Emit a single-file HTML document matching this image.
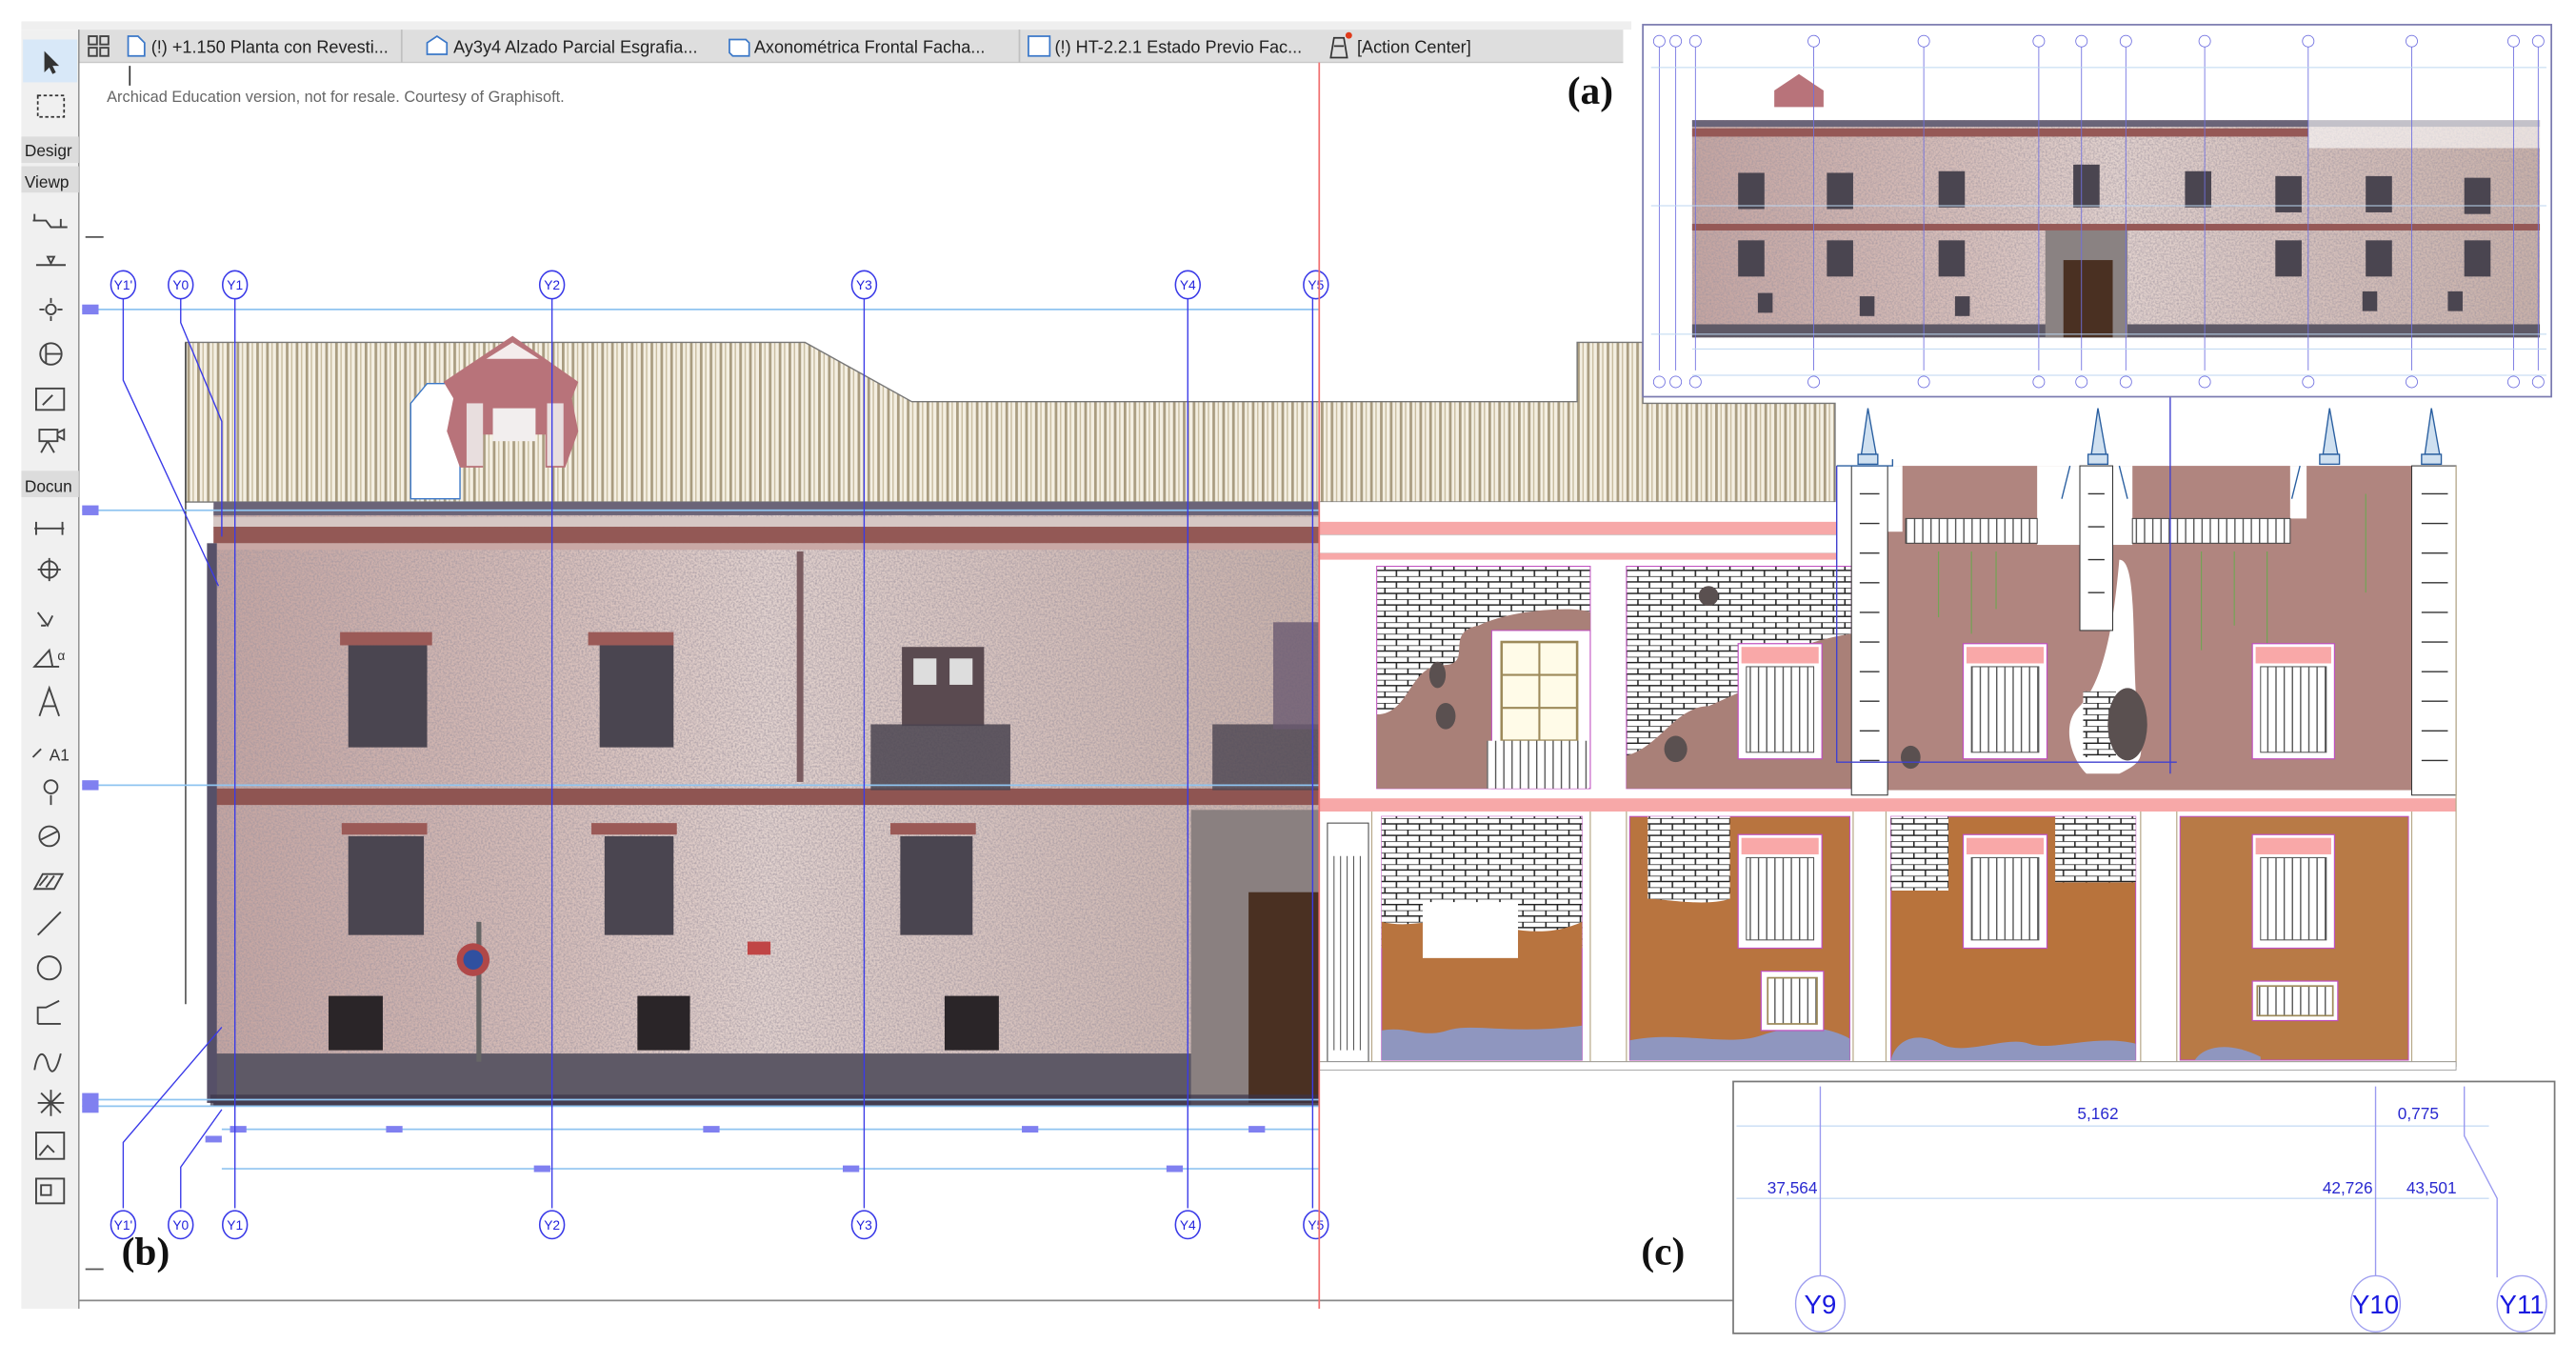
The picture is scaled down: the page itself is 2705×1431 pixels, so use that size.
<!DOCTYPE html>
<html><head><meta charset="utf-8">
<style>
html,body{margin:0;padding:0;background:#fff;overflow:hidden}
svg{display:block}
text{font-family:"Liberation Sans",sans-serif}
.lab{font-family:"Liberation Serif",serif;font-weight:bold;font-size:24px;fill:#111}
.g{fill:#fff;stroke:#3a3ae8;stroke-width:0.9}
.gt{font-size:8px;fill:#2222dd;text-anchor:middle}
.gl{stroke:#3a3ae8;stroke-width:0.8;fill:none}
.hl{stroke:#8fc4f0;stroke-width:1}
.tab{font-size:10.5px;fill:#222}
.tb{font-size:10px;fill:#222}
.ic{stroke:#444;stroke-width:1.1;fill:none}
</style></head><body>
<svg width="2705" height="1431" viewBox="0 0 1568 828" preserveAspectRatio="none" xmlns="http://www.w3.org/2000/svg">
<defs>
<pattern id="stripe" width="6" height="120" patternUnits="userSpaceOnUse">
<rect width="6" height="120" fill="#f4efe2"/><rect x="0" width="1.6" height="120" fill="#a99c80"/><rect x="3.2" width="0.8" height="120" fill="#c8bc9f"/>
</pattern>
<pattern id="brick" width="14" height="7" patternUnits="userSpaceOnUse">
<rect width="14" height="7" fill="#fff"/><path d="M0 0H14M0 3.5H14M3 0V3.5M10 3.5V7" stroke="#222" stroke-width="0.9"/>
</pattern>
<pattern id="grille" width="5" height="60" patternUnits="userSpaceOnUse">
<rect width="5" height="60" fill="#fff"/><rect width="0.8" height="60" fill="#555"/>
</pattern>
<filter id="noise" x="0" y="0" width="100%" height="100%">
<feTurbulence type="fractalNoise" baseFrequency="0.9" numOctaves="2" seed="3"/>
<feColorMatrix type="matrix" values="0 0 0 0 0.35  0 0 0 0 0.3  0 0 0 0 0.35  0 0 0 1.6 -0.55"/>
<feComposite in2="SourceGraphic" operator="in"/>
</filter>
<linearGradient id="wall" x1="0" y1="0" x2="1" y2="0">
<stop offset="0" stop-color="#c4a4a0"/><stop offset="0.3" stop-color="#d6bdb8"/><stop offset="0.5" stop-color="#e2d2ce"/><stop offset="0.75" stop-color="#d4bfba"/><stop offset="1" stop-color="#c8b0a8"/>
</linearGradient>
</defs>

<!-- UI chrome -->
<rect x="13" y="13" width="980" height="5" fill="#efefef"/>
<rect x="48" y="18" width="940" height="20" fill="#dedede"/>
<rect x="48" y="37.5" width="940" height="0.8" fill="#c8c8c8"/>
<rect x="13" y="18" width="35" height="777" fill="#f0f0f0"/>
<line x1="48" y1="18" x2="48" y2="795" stroke="#888" stroke-width="0.8"/>
<rect x="14" y="24" width="33" height="26" fill="#d8e8f8"/>
<path d="M27 31l0 13 3-3 2 4 2-1-2-4 4 0z" fill="#333"/>
<rect x="23" y="58" width="16" height="13" fill="none" stroke="#333" stroke-width="1" stroke-dasharray="2 1.5"/>
<rect x="13" y="83" width="35" height="16" fill="#dcdcdc"/><text x="15" y="95" class="tb">Desigr</text>
<rect x="13" y="101" width="35" height="16" fill="#dcdcdc"/><text x="15" y="114" class="tb">Viewp</text>
<rect x="13" y="286" width="35" height="16" fill="#dcdcdc"/><text x="15" y="299" class="tb">Docun</text>
<g class="ic">
<path d="M20 134h8l3 4h10M21 130v4M37 138v-5"/>
<path d="M22 161h18M31 160l-2-4h4z"/>
<circle cx="31" cy="188" r="3"/><path d="M31 181v3M31 192v3M24 188h3M35 188h3"/>
<circle cx="31" cy="215" r="6.5"/><path d="M28 209v12M28 215h9"/>
<rect x="22" y="236" width="17" height="13"/><path d="M26 246l6-6"/>
<path d="M24 261h11v7H24zM35 263l4-2v6l-4-2M29 268l-4 7M29 268l4 7"/>
<path d="M21 321h18M22 317v8M38 317v8"/>
<circle cx="30" cy="346" r="5"/><path d="M30 339v14M23 346h14"/>
<path d="M23 372l6 8 3-6M28 380l-3 0"/>
<path d="M21 405l9-10 2 10zM21 405h15"/>
<path d="M24 435l6-17 6 17M26 429h8"/>
<path d="M20 460l5-5"/>
<circle cx="31" cy="478" r="4"/><path d="M31 483v6"/>
<circle cx="30" cy="508" r="6"/><path d="M25 510l10-5"/>
<path d="M21 540l5-9h12l-5 9z"/><path d="M24 538l5-6M28 539l5-7"/>
<path d="M23 568l14-14"/>
<circle cx="30" cy="588" r="7"/>
<path d="M23 622v-10h5l8-4M23 622h14"/>
<path d="M21 650c2-12 6-12 8-4s5 6 8-6"/>
<path d="M31 662v16M23 670h16M25 664l12 12M25 676l12-12"/>
<rect x="22" y="688" width="17" height="16"/><path d="M24 702l5-6 4 4"/>
<rect x="22" y="716" width="17" height="15"/><path d="M25 720h6v6h-6z"/>
</g>
<text x="30" y="462" font-size="10" fill="#333">A1</text>
<text x="35" y="401" font-size="8" fill="#333">α</text>

<!-- tabs -->
<g class="ic" stroke="#444"><rect x="54" y="22" width="5" height="5"/><rect x="61" y="22" width="5" height="5"/><rect x="54" y="29" width="5" height="5"/><rect x="61" y="29" width="5" height="5"/></g>
<path d="M78 22h6l4 4v8H78z" fill="#fff" stroke="#3a77c8"/>
<text x="92" y="32" class="tab">(!) +1.150 Planta con Revesti...</text>
<rect x="244" y="18" width="1" height="20" fill="#c0c0c0"/>
<path d="M260 33v-7l6-4 6 4v7z" fill="#fff" stroke="#3a77c8"/>
<text x="276" y="32" class="tab">Ay3y4 Alzado Parcial Esgrafia...</text>
<path d="M444 24h10l2 2v8h-10l-2-2z" fill="#fff" stroke="#3a77c8"/>
<text x="459" y="32" class="tab">Axonométrica Frontal Facha...</text>
<rect x="620" y="18" width="1" height="20" fill="#c0c0c0"/>
<rect x="626" y="22" width="13" height="12" fill="#fff" stroke="#3a77c8"/>
<text x="642" y="32" class="tab">(!) HT-2.2.1 Estado Previo Fac...</text>
<path d="M810 35l2-12h6l2 12zM812 28h6" fill="none" stroke="#333"/>
<circle cx="821" cy="21.5" r="2" fill="#e03a1a"/>
<text x="826" y="32" class="tab">[Action Center]</text>
<text x="65" y="62" font-size="9.5" fill="#666">Archicad Education version, not for resale. Courtesy of Graphisoft.</text>
<line x1="79" y1="40" x2="79" y2="52" stroke="#333"/>
<line x1="52" y1="144" x2="63" y2="144" stroke="#555"/>
<line x1="52" y1="771" x2="63" y2="771" stroke="#555"/>

<!-- drawing frame -->
<line x1="48" y1="790" x2="1055" y2="790" stroke="#888" stroke-width="1"/>

<!-- roof (b) -->
<path d="M113 208H490L555 244H960V208H1000V245H1117V305H113Z" fill="url(#stripe)" stroke="#777" stroke-width="0.8"/>
<line x1="113" y1="208" x2="113" y2="610" stroke="#333" stroke-width="0.8"/>
<!-- dormer -->
<path d="M250 245l10-12h20v70h-30z" fill="#fff" stroke="#3a77c8" stroke-width="0.8"/>
<path d="M270 232l42-28 40 28-4 10 4 20-8 22h-12v-20h-38v20h-14l-8-22 4-20z" fill="#b8737a"/>
<path d="M296 218l16-10 16 10z" fill="#f4ecec"/>
<rect x="300" y="248" width="26" height="20" fill="#f2eeee"/>
<rect x="284" y="245" width="10" height="38" fill="#e8dede"/>
<rect x="333" y="245" width="10" height="38" fill="#e8dede"/>

<!-- point cloud facade (b) -->
<rect x="130" y="308" width="673" height="364" fill="url(#wall)"/>
<rect x="130" y="308" width="673" height="364" fill="#fff" filter="url(#noise)" opacity="0.95"/>
<rect x="130" y="305" width="673" height="8" fill="#6b6478"/>
<rect x="130" y="314" width="673" height="6" fill="#d6c7c4"/>
<rect x="130" y="320" width="673" height="10" fill="#935855"/>
<rect x="130" y="330" width="673" height="4" fill="#c9a8a5"/>
<rect x="130" y="479" width="673" height="10" fill="#8f5552"/>
<rect x="130" y="640" width="673" height="32" fill="#5e5966"/>
<rect x="126" y="330" width="6" height="340" fill="#565068"/>
<rect x="485" y="335" width="4" height="140" fill="#7a5c60"/>
<rect x="290" y="560" width="3" height="85" fill="#666"/>
<!-- windows -->
<g fill="#4a4550">
<rect x="212" y="392" width="48" height="62"/><rect x="365" y="392" width="45" height="62"/>
<rect x="212" y="508" width="46" height="60"/><rect x="368" y="508" width="42" height="60"/><rect x="548" y="508" width="44" height="60"/>
<rect x="200" y="605" width="33" height="33" fill="#2a2528"/><rect x="388" y="605" width="32" height="33" fill="#2a2528"/><rect x="575" y="605" width="33" height="33" fill="#2a2528"/>
</g>
<g fill="#9b5a57"><rect x="207" y="384" width="56" height="8"/><rect x="358" y="384" width="52" height="8"/><rect x="208" y="500" width="52" height="7"/><rect x="360" y="500" width="52" height="7"/><rect x="542" y="500" width="52" height="7"/></g>
<rect x="549" y="393" width="50" height="48" fill="#5a4a50"/><rect x="556" y="400" width="14" height="16" fill="#ddd"/><rect x="578" y="400" width="14" height="16" fill="#ddd"/>
<rect x="530" y="440" width="85" height="40" fill="#4a4450" opacity="0.85"/>
<rect x="738" y="440" width="65" height="40" fill="#4a4450" opacity="0.8"/>
<rect x="775" y="378" width="28" height="65" fill="#6a5a70" opacity="0.8"/>
<rect x="725" y="492" width="78" height="180" fill="#8a8080"/>
<rect x="760" y="542" width="43" height="128" fill="#4a3022"/>
<circle cx="288" cy="583" r="10" fill="#b04848"/><circle cx="288" cy="583" r="6" fill="#3050a0"/>
<rect x="455" y="572" width="14" height="8" fill="#c04545"/>
<rect x="128" y="665" width="675" height="7" fill="#3a3348" opacity="0.7"/>

<!-- grid lines (b) -->
<g class="hl"><line x1="50" y1="188" x2="803" y2="188"/><line x1="50" y1="310" x2="803" y2="310"/><line x1="50" y1="477" x2="803" y2="477"/><line x1="50" y1="668" x2="803" y2="668"/><line x1="50" y1="672" x2="803" y2="672"/><line x1="135" y1="686" x2="803" y2="686"/><line x1="135" y1="710" x2="803" y2="710"/></g>
<g fill="#8080f0"><rect x="50" y="185" width="10" height="6"/><rect x="50" y="307" width="10" height="6"/><rect x="50" y="474" width="10" height="6"/><rect x="50" y="664" width="10" height="12"/>
<rect x="140" y="684" width="10" height="4"/><rect x="235" y="684" width="10" height="4"/><rect x="428" y="684" width="10" height="4"/><rect x="622" y="684" width="10" height="4"/><rect x="760" y="684" width="10" height="4"/>
<rect x="325" y="708" width="10" height="4"/><rect x="513" y="708" width="10" height="4"/><rect x="710" y="708" width="10" height="4"/><rect x="125" y="690" width="10" height="4"/></g>
<g class="gl">
<line x1="143" y1="181" x2="143" y2="734"/><line x1="336" y1="181" x2="336" y2="734"/><line x1="526" y1="181" x2="526" y2="734"/><line x1="723" y1="181" x2="723" y2="734"/><line x1="799" y1="181" x2="799" y2="734"/>
<path d="M75 181v50l58 125"/><path d="M110 181v15l25 60v70"/><path d="M75 734v-40l60-70"/><path d="M110 734v-25l25-35"/>
</g>
<g>
<ellipse class="g" cx="75" cy="173" rx="7.5" ry="8.5"/><text class="gt" x="75" y="176">Y1'</text>
<ellipse class="g" cx="110" cy="173" rx="7.5" ry="8.5"/><text class="gt" x="110" y="176">Y0</text>
<ellipse class="g" cx="143" cy="173" rx="7.5" ry="8.5"/><text class="gt" x="143" y="176">Y1</text>
<ellipse class="g" cx="336" cy="173" rx="7.5" ry="8.5"/><text class="gt" x="336" y="176">Y2</text>
<ellipse class="g" cx="526" cy="173" rx="7.5" ry="8.5"/><text class="gt" x="526" y="176">Y3</text>
<ellipse class="g" cx="723" cy="173" rx="7.5" ry="8.5"/><text class="gt" x="723" y="176">Y4</text>
<ellipse class="g" cx="801" cy="173" rx="7.5" ry="8.5"/><text class="gt" x="801" y="176">Y5</text>
<ellipse class="g" cx="75" cy="744" rx="7.5" ry="8.5"/><text class="gt" x="75" y="747">Y1'</text>
<ellipse class="g" cx="110" cy="744" rx="7.5" ry="8.5"/><text class="gt" x="110" y="747">Y0</text>
<ellipse class="g" cx="143" cy="744" rx="7.5" ry="8.5"/><text class="gt" x="143" y="747">Y1</text>
<ellipse class="g" cx="336" cy="744" rx="7.5" ry="8.5"/><text class="gt" x="336" y="747">Y2</text>
<ellipse class="g" cx="526" cy="744" rx="7.5" ry="8.5"/><text class="gt" x="526" y="747">Y3</text>
<ellipse class="g" cx="723" cy="744" rx="7.5" ry="8.5"/><text class="gt" x="723" y="747">Y4</text>
<ellipse class="g" cx="801" cy="744" rx="7.5" ry="8.5"/><text class="gt" x="801" y="747">Y5</text>
</g>

<!-- elevation (c) -->
<rect x="803" y="305" width="315" height="12" fill="#fff"/>
<rect x="803" y="317" width="315" height="8" fill="#f7a8a8"/>
<rect x="803" y="325" width="315" height="11" fill="#fff" stroke="#ccc" stroke-width="0.5"/>
<rect x="803" y="336" width="315" height="4" fill="#f7a8a8"/>
<rect x="1146" y="283" width="327" height="197" fill="#b0857f"/>
<rect x="1146" y="283" width="12" height="40" fill="#fff"/>
<rect x="1240" y="283" width="58" height="48" fill="#fff"/>
<rect x="1394" y="283" width="10" height="32" fill="#fff"/>
<rect x="1160" y="315" width="80" height="15" fill="url(#grille)" stroke="#444" stroke-width="0.6"/>
<rect x="1298" y="315" width="96" height="15" fill="url(#grille)" stroke="#444" stroke-width="0.6"/>
<g stroke="#6aa84f" stroke-width="0.6"><path d="M1180 335v40M1200 335v50M1215 335v35M1340 335v60M1360 335v45M1380 335v70M1440 300v60"/></g>
<rect x="838" y="344" width="130" height="135" fill="url(#brick)" stroke="#c050c0" stroke-width="0.6"/>
<path d="M900 380c20-10 60-12 68-8v107H838v-45c20 0 20-30 40-30s0-20 22-24z" fill="#a98078"/>
<rect x="990" y="344" width="137" height="135" fill="url(#brick)" stroke="#c050c0" stroke-width="0.6"/>
<path d="M1060 420c15-20 35-30 67-35v94H990v-20c20-5 30-30 50-30z" fill="#a98078"/>
<rect x="908" y="383" width="60" height="96" fill="#fff" stroke="#c050c0" stroke-width="0.6"/>
<rect x="914" y="390" width="46" height="60" fill="#fffbe8" stroke="#9d8a5a" stroke-width="1.5"/>
<path d="M937 390v60M914 410h46M914 430h46" stroke="#9d8a5a" stroke-width="1.2"/>
<rect x="905" y="450" width="62" height="29" fill="url(#grille)"/>
<path d="M1290 340c10 0 8 40 10 80s10 40-10 50h-20c-10-10-15-30-5-40s20-30 25-90z" fill="#fff"/>
<path d="M1268 420h20v40h-20z" fill="url(#brick)"/>
<g fill="#5a5050"><ellipse cx="880" cy="435" rx="6" ry="8"/><ellipse cx="1020" cy="455" rx="7" ry="8"/><ellipse cx="1040" cy="362" rx="6" ry="6"/><ellipse cx="1295" cy="440" rx="12" ry="22"/><ellipse cx="1163" cy="460" rx="6" ry="7"/><ellipse cx="875" cy="410" rx="5" ry="8"/></g>
<!-- pilasters & spires -->
<g fill="#fff" stroke="#333" stroke-width="0.6">
<rect x="1127" y="283" width="22" height="200"/><rect x="1266" y="283" width="20" height="100"/><rect x="1468" y="283" width="27" height="200"/>
</g>
<g stroke="#333" stroke-width="0.8">
<path d="M1132 300h12M1132 318h12M1132 336h12M1132 354h12M1132 372h12M1132 390h12M1132 408h12M1132 426h12M1132 444h12M1132 462h12"/>
<path d="M1474 300h16M1474 318h16M1474 336h16M1474 354h16M1474 372h16M1474 390h16M1474 408h16M1474 426h16M1474 444h16M1474 462h16"/>
<path d="M1271 300h10M1271 320h10M1271 340h10M1271 360h10"/>
</g>
<g fill="#cfe0f0" stroke="#2a5fa0" stroke-width="0.8">
<path d="M1137 248l-4 28h9z"/><path d="M1277 248l-4 28h9z"/><path d="M1418 248l-4 28h9z"/><path d="M1480 248l-4 28h9z"/>
<rect x="1131" y="276" width="12" height="6"/><rect x="1271" y="276" width="12" height="6"/><rect x="1412" y="276" width="12" height="6"/><rect x="1474" y="276" width="12" height="6"/>
</g>
<path d="M1118 283h34v-4M1260 283l-5 20M1290 283l5 20M1400 283l-5 20" stroke="#2a5fa0" fill="none" stroke-width="0.8"/>
<path d="M1118 283v180h207" stroke="#4040d0" fill="none" stroke-width="0.8"/>
<line x1="1321" y1="240" x2="1321" y2="470" stroke="#4040d0" stroke-width="0.8"/>
<!-- upper windows -->
<g>
<rect x="1058" y="391" width="51" height="70" fill="#fff" stroke="#c050c0" stroke-width="0.7"/>
<rect x="1195" y="391" width="51" height="70" fill="#fff" stroke="#c050c0" stroke-width="0.7"/>
<rect x="1371" y="391" width="50" height="70" fill="#fff" stroke="#c050c0" stroke-width="0.7"/>
<rect x="1060" y="393" width="47" height="10" fill="#f9a8a8"/><rect x="1197" y="393" width="47" height="10" fill="#f9a8a8"/><rect x="1373" y="393" width="46" height="10" fill="#f9a8a8"/>
<rect x="1063" y="405" width="41" height="52" fill="url(#grille)" stroke="#555" stroke-width="0.6"/>
<rect x="1200" y="405" width="41" height="52" fill="url(#grille)" stroke="#555" stroke-width="0.6"/>
<rect x="1376" y="405" width="40" height="52" fill="url(#grille)" stroke="#555" stroke-width="0.6"/>
</g>
<!-- lower storey -->
<rect x="803" y="485" width="692" height="8" fill="#f7a8a8"/>
<rect x="803" y="493" width="692" height="157" fill="#fff"/>
<g stroke="#b7a888" stroke-width="0.7" fill="none">
<path d="M835 493v155M968 493v155M990 493v155M1128 493v155M1148 493v155M1303 493v155M1325 493v155M1468 493v155M1495 283v365M803 645h692"/>
</g>
<rect x="808" y="500" width="25" height="145" fill="#fff" stroke="#444" stroke-width="0.6"/>
<path d="M812 520v118M816 520v118M820 520v118M824 520v118M828 520v118" stroke="#555" stroke-width="0.6"/>
<rect x="841" y="496" width="122" height="148" fill="#b8743f" stroke="#c050c0" stroke-width="0.6"/>
<rect x="841" y="496" width="122" height="80" fill="url(#brick)"/>
<path d="M841 560c20 5 40-5 60 0s40 10 62 0v16H841z" fill="#b8743f"/>
<rect x="866" y="548" width="58" height="34" fill="#fff"/>
<rect x="992" y="496" width="134" height="148" fill="#b8743f" stroke="#c050c0" stroke-width="0.6"/>
<path d="M1003 496h50v50c-15 5-40 0-50 0z" fill="url(#brick)"/>
<rect x="1151" y="496" width="149" height="148" fill="#b8733c" stroke="#c050c0" stroke-width="0.6"/>
<path d="M1151 496h35v45h-35zM1251 496h49v40h-49z" fill="url(#brick)"/>
<rect x="1327" y="496" width="139" height="148" fill="#b87a46" stroke="#c050c0" stroke-width="0.6"/>
<g fill="#8f96bf">
<path d="M841 644v-18c15-3 25 5 40 0s40 3 82-3v21z"/><path d="M992 644v-12c30-6 60 4 80-3s40-6 54 2v13z"/>
<path d="M1151 644c3-12 15-18 30-10s40-5 54 0 40-6 65 0v10z"/><path d="M1336 644c5-8 20-12 40-2v2z"/>
</g>
<g>
<rect x="1058" y="507" width="51" height="69" fill="#fff" stroke="#c050c0" stroke-width="0.7"/>
<rect x="1195" y="507" width="51" height="69" fill="#fff" stroke="#c050c0" stroke-width="0.7"/>
<rect x="1371" y="507" width="50" height="69" fill="#fff" stroke="#c050c0" stroke-width="0.7"/>
<rect x="1060" y="509" width="47" height="10" fill="#f9a8a8"/><rect x="1197" y="509" width="47" height="10" fill="#f9a8a8"/><rect x="1373" y="509" width="46" height="10" fill="#f9a8a8"/>
<rect x="1063" y="521" width="41" height="50" fill="url(#grille)" stroke="#555" stroke-width="0.6"/>
<rect x="1200" y="521" width="41" height="50" fill="url(#grille)" stroke="#555" stroke-width="0.6"/>
<rect x="1376" y="521" width="40" height="50" fill="url(#grille)" stroke="#555" stroke-width="0.6"/>
<rect x="1072" y="590" width="38" height="36" fill="#fff" stroke="#c050c0" stroke-width="0.7"/><rect x="1076" y="594" width="30" height="28" fill="url(#grille)" stroke="#9d8a5a"/>
<rect x="1371" y="596" width="52" height="24" fill="#fff" stroke="#c050c0" stroke-width="0.7"/><rect x="1374" y="599" width="46" height="18" fill="url(#grille)" stroke="#9d8a5a"/>
</g>
<rect x="803" y="645" width="692" height="5" fill="#fff" stroke="#999" stroke-width="0.5"/>
<line x1="803" y1="38" x2="803" y2="795" stroke="#f07070" stroke-width="1"/>

<!-- inset (a) -->
<rect x="1000" y="15" width="553" height="226" fill="#fff" stroke="#7a7ab0" stroke-width="1"/>
<rect x="1030" y="73" width="516" height="132" fill="url(#wall)"/>
<rect x="1030" y="73" width="516" height="132" fill="#fff" filter="url(#noise)" opacity="0.85"/>
<rect x="1030" y="73" width="516" height="4" fill="#6a6478"/>
<rect x="1030" y="78" width="375" height="5" fill="#955856"/>
<rect x="1030" y="136" width="516" height="4" fill="#955856"/>
<rect x="1030" y="197" width="516" height="8" fill="#5e5966"/>
<rect x="1405" y="60" width="141" height="30" fill="#fff" opacity="0.6"/>
<g fill="#4a4550">
<rect x="1058" y="105" width="16" height="22"/><rect x="1112" y="105" width="16" height="22"/><rect x="1180" y="104" width="16" height="22"/><rect x="1262" y="100" width="16" height="26"/><rect x="1330" y="104" width="16" height="22"/><rect x="1385" y="107" width="16" height="22"/><rect x="1440" y="107" width="16" height="22"/><rect x="1500" y="108" width="16" height="22"/>
<rect x="1058" y="146" width="16" height="22"/><rect x="1112" y="146" width="16" height="22"/><rect x="1180" y="146" width="16" height="22"/><rect x="1385" y="146" width="16" height="22"/><rect x="1440" y="146" width="16" height="22"/><rect x="1500" y="146" width="16" height="22"/>
<rect x="1070" y="178" width="9" height="12"/><rect x="1132" y="180" width="9" height="12"/><rect x="1190" y="180" width="9" height="12"/><rect x="1438" y="177" width="9" height="12"/><rect x="1490" y="177" width="9" height="12"/>
</g>
<rect x="1245" y="140" width="50" height="65" fill="#8a8282"/><rect x="1256" y="158" width="30" height="47" fill="#4a3022"/>
<path d="M1080 55l15-10 15 10v10h-30z" fill="#b8737a"/>
<g stroke="#6f6fe0" stroke-width="0.5">
<path d="M1010 25v200M1020 25v200M1032 25v200M1104 25v200M1171 25v200M1241 25v200M1267 25v200M1294 25v200M1342 25v200M1405 25v200M1468 25v200M1530 25v200M1545 25v200"/>
</g>
<g stroke="#bcd6f0" stroke-width="0.6"><path d="M1005 41h545M1005 125h545M1005 203h545M1030 212h520M1030 228h520"/></g>
<g fill="#fff" stroke="#6f6fe0" stroke-width="0.5">
<circle cx="1010" cy="25" r="3.5"/><circle cx="1020" cy="25" r="3.5"/><circle cx="1032" cy="25" r="3.5"/><circle cx="1104" cy="25" r="3.5"/><circle cx="1171" cy="25" r="3.5"/><circle cx="1241" cy="25" r="3.5"/><circle cx="1267" cy="25" r="3.5"/><circle cx="1294" cy="25" r="3.5"/><circle cx="1342" cy="25" r="3.5"/><circle cx="1405" cy="25" r="3.5"/><circle cx="1468" cy="25" r="3.5"/><circle cx="1530" cy="25" r="3.5"/><circle cx="1545" cy="25" r="3.5"/>
<circle cx="1010" cy="232" r="3.5"/><circle cx="1020" cy="232" r="3.5"/><circle cx="1032" cy="232" r="3.5"/><circle cx="1104" cy="232" r="3.5"/><circle cx="1171" cy="232" r="3.5"/><circle cx="1241" cy="232" r="3.5"/><circle cx="1267" cy="232" r="3.5"/><circle cx="1294" cy="232" r="3.5"/><circle cx="1342" cy="232" r="3.5"/><circle cx="1405" cy="232" r="3.5"/><circle cx="1468" cy="232" r="3.5"/><circle cx="1530" cy="232" r="3.5"/><circle cx="1545" cy="232" r="3.5"/>
</g>

<!-- dimension box -->
<rect x="1055" y="657" width="500" height="153" fill="#fff" stroke="#777" stroke-width="1"/>
<g stroke="#c8dcf5" stroke-width="0.8"><line x1="1057" y1="684" x2="1448" y2="684"/><line x1="1448" y1="684" x2="1515" y2="684"/><line x1="1057" y1="728" x2="1515" y2="728"/></g>
<g stroke="#9a9af0" stroke-width="0.8" fill="none">
<line x1="1108" y1="660" x2="1108" y2="776"/><line x1="1446" y1="660" x2="1446" y2="776"/><path d="M1500 660v30l20 38v48"/>
</g>
<g font-size="10" fill="#2a2ad0" text-anchor="middle">
<text x="1277" y="680">5,162</text><text x="1472" y="680">0,775</text>
<text x="1091" y="725">37,564</text><text x="1429" y="725">42,726</text><text x="1480" y="725">43,501</text>
</g>
<g fill="#fff" stroke="#a0a0f0" stroke-width="0.8">
<ellipse cx="1108" cy="792" rx="15" ry="17"/><ellipse cx="1446" cy="792" rx="15" ry="17"/><ellipse cx="1535" cy="792" rx="15" ry="17"/>
</g>
<g font-size="16" fill="#1a1ae0" text-anchor="middle">
<text x="1108" y="798">Y9</text><text x="1446" y="798">Y10</text><text x="1535" y="798">Y11</text>
</g>

<!-- labels -->
<text class="lab" x="954" y="63">(a)</text>
<text class="lab" x="74" y="768">(b)</text>
<text class="lab" x="999" y="768">(c)</text>
</svg>
</body></html>
